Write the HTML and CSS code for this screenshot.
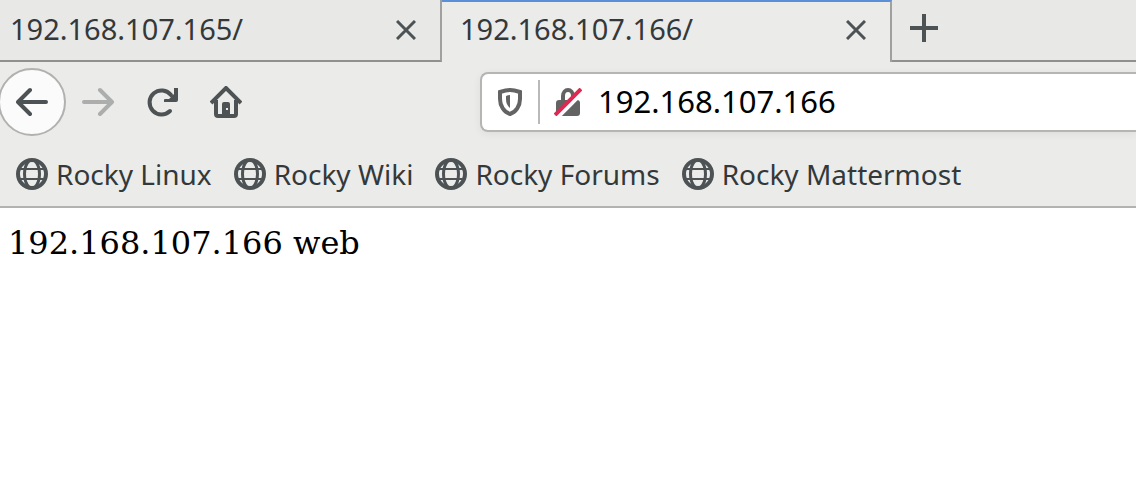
FILE: index.html
```html
<!DOCTYPE html>
<html lang="en">
<head>
<meta charset="utf-8">
<title>192.168.107.166/</title>
<link rel="stylesheet" href="styles.css">
</head>
<body>
<svg class="defs" aria-hidden="true">
  <symbol id="globe" viewBox="0 0 32 32">
    <g fill="none" stroke="currentColor">
      <circle cx="16" cy="16" r="14" stroke-width="4"/>
      <path d="M3 11h26M3 21h26" stroke-width="2"/>
      <path d="M13 3C7 9 7 23 13 29M19 3c6 6 6 20 0 26" stroke-width="3"/>
    </g>
  </symbol>
  <symbol id="close" viewBox="0 0 20 20">
    <path d="M1 1l18 18M19 1L1 19" fill="none" stroke="currentColor" stroke-width="3"/>
  </symbol>
</svg>
<header class="browser">
  <div class="tabs">
    <div class="tab tab-first">
      <a class="tab-title" href="#">192.168.107.165/</a>
      <button class="icon-button" aria-label="Close tab"><svg class="icon-close"><use href="#close"/></svg></button>
    </div>
    <div class="tab tab-active">
      <a class="tab-title" href="#">192.168.107.166/</a>
      <button class="icon-button" aria-label="Close tab"><svg class="icon-close"><use href="#close"/></svg></button>
    </div>
    <div class="tab-rest">
      <button class="icon-button" aria-label="New tab"><svg class="icon-plus" viewBox="0 0 28 28"><path d="M14 0v28M0 14h28" stroke="currentColor" stroke-width="4"/></svg></button>
    </div>
  </div>
  <div class="nav">
    <div class="nav-buttons">
      <button class="icon-button back" aria-label="Back"><svg class="icon" viewBox="0 0 32 32"><path d="M30 16H3M14 4L2 16l12 12" fill="none" stroke="currentColor" stroke-width="4" stroke-linejoin="round" stroke-linecap="round"/></svg></button>
      <button class="icon-button forward" aria-label="Forward" disabled><svg class="icon" viewBox="0 0 32 32"><path d="M2 16h27M18 4l12 12-12 12" fill="none" stroke="currentColor" stroke-width="4" stroke-linejoin="round" stroke-linecap="round"/></svg></button>
      <button class="icon-button" aria-label="Reload"><svg class="icon" viewBox="0 0 32 32"><path d="M24 25A12 12 0 1 1 25 9" fill="none" stroke="currentColor" stroke-width="4" stroke-linecap="round"/><path d="M32 2v12q0 2-2 2H18v-2q0-1 1-1h4l5-5V2z" fill="currentColor"/></svg></button>
      <button class="icon-button" aria-label="Home"><svg class="icon" viewBox="0 0 32 32"><path d="M1 17L16 2l15 15M6 14v14q0 2 2 2h16q2 0 2-2V14" fill="none" stroke="currentColor" stroke-width="4"/><path d="M12 30V18q0-2 2-2h4q2 0 2 2v12z" fill="currentColor"/><path d="M16 22h2v2h-2z" fill="#ebebea"/></svg></button>
    </div>
    <div class="address">
      <svg class="icon-shield" viewBox="0 0 24 28"><path d="M12 2c4 0 7 1 10 2v7c0 7-4 13-10 15C6 24 2 18 2 11V4c3-1 6-2 10-2z" fill="none" stroke="currentColor" stroke-width="4"/><path d="M12 7v13q-4-3-4-9V8q2-1 4-1z" fill="currentColor"/></svg>
      <svg class="icon-lock" viewBox="0 0 28 28"><path d="M9 13V8a5 6 0 0 1 10 0v5" fill="none" stroke="currentColor" stroke-width="4"/><path d="M5 12h18q3 0 3 3v10q0 3-3 3H5q-3 0-3-3V15q0-3 3-3z" fill="currentColor"/><path d="M29 4L4 29" stroke="#fff" stroke-width="4"/><path d="M27 1L1 27" stroke="#e22850" stroke-width="4"/></svg>
      <input class="url" type="text" aria-label="Address" value="192.168.107.166">
    </div>
  </div>
  <nav class="bookmarks">
    <a class="bookmark" href="#"><svg class="icon"><use href="#globe"/></svg>Rocky Linux</a>
    <a class="bookmark" href="#"><svg class="icon"><use href="#globe"/></svg>Rocky Wiki</a>
    <a class="bookmark" href="#"><svg class="icon"><use href="#globe"/></svg>Rocky Forums</a>
    <a class="bookmark" href="#"><svg class="icon"><use href="#globe"/></svg>Rocky Mattermost</a>
  </nav>
</header>
<main class="page">192.168.107.166 web</main>
</body>
</html>
```
FILE: styles.css
```css
* { box-sizing: border-box; }
body {
  margin: 0;
  background: #fff;
  font-family: "Noto Sans", sans-serif;
}
.defs { position: absolute; width: 0; height: 0; }
.browser {
  background: #ebebea;
  color: #33393b;
  border-bottom: 2px solid #b2b2b0;
  font-size: 29px;
  overflow: hidden;
}
.tabs { display: flex; height: 62px; }
.tab, .tab-rest {
  display: flex;
  align-items: center;
  background: #e8e8e7;
  border-bottom: 2px solid #90908f;
}
.tab {
  flex: 0 0 450px;
  justify-content: space-between;
  padding: 0 24px 0 18px;
  border-right: 2px solid #a0a09f;
}
.tab-first { flex-basis: 442px; padding-left: 10px; }
.tab-active {
  background: #ebebea;
  border-top: 2px solid #5b8fd6;
  border-bottom: 0;
  padding-bottom: 4px;
}
.tab-rest { flex: 1; padding: 0 18px 4px; }
.tab-title, .bookmark { color: inherit; text-decoration: none; line-height: 40px; }
.tab-title { padding-bottom: 2px; }
.icon-button {
  display: flex;
  align-items: center;
  justify-content: center;
  padding: 0;
  border: 0;
  background: none;
  color: #4d5254;
}
.icon { width: 32px; height: 32px; flex: none; color: #4d5254; }
.icon-close { width: 20px; height: 20px; }
.icon-plus { width: 28px; height: 28px; }
.nav { display: flex; align-items: center; height: 80px; }
.nav-buttons { display: flex; align-items: center; gap: 32px; flex: 0 0 480px; }
.back {
  width: 68px;
  height: 68px;
  margin: 0 -16px 0 -2px;
  border: 2px solid #b1b1b0;
  border-radius: 50%;
  background: #fbfbfb;
}
.forward .icon { color: #acaead; }
.address {
  display: flex;
  align-items: center;
  flex: 1;
  height: 60px;
  padding-left: 16px;
  border: 2px solid #b5b5b3;
  border-right: 0;
  border-radius: 8px 0 0 8px;
  background: #fff;
  box-shadow: 0 2px 8px rgba(0, 0, 0, 0.06);
  color: #636363;
}
.icon-shield { width: 24px; height: 28px; flex: none; }
.icon-lock {
  box-sizing: content-box;
  width: 28px;
  height: 28px;
  flex: none;
  margin: 0 16px;
  padding: 8px 0 8px 14px;
  border-left: 2px solid #b9b9b7;
}
.url {
  flex: 1;
  min-width: 0;
  padding: 0 0 2px;
  border: 0;
  outline: 0;
  background: none;
  color: #000;
  font: 31px/40px "Noto Sans", sans-serif;
}
.bookmarks { display: flex; gap: 22px; height: 64px; padding: 0 16px; align-items: center; }
.bookmark { display: flex; align-items: center; gap: 8px; white-space: nowrap; font-size: 28px; }
.page {
  padding: 16px 8px;
  color: #000;
  font: 32px/38px "DejaVu Serif", serif;
}
```
